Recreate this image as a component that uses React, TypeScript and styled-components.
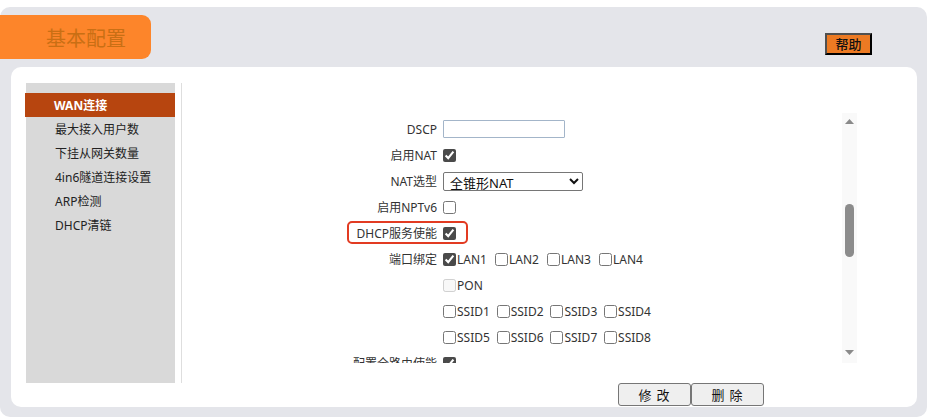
import React from "react";
import styled, { createGlobalStyle } from "styled-components";

const Global = createGlobalStyle`
  html, body { margin: 0; padding: 0; background: #ffffff; }
  body { font-family: "Noto Sans", "Noto Sans CJK SC", sans-serif; font-size: 12px; color: #333; }
  * { box-sizing: border-box; }
`;

const Page = styled.div`
  width: 931px;
  height: 420px;
  padding-top: 7px;
`;

const Panel = styled.div`
  width: 927px;
  height: 410px;
  background: #e4e5ea;
  border-radius: 10px;
  display: flex;
  flex-direction: column;
`;

const Header = styled.div`
  height: 60px;
  display: flex;
  justify-content: space-between;
  align-items: flex-start;
`;

const Tab = styled.div`
  margin-top: 8px;
  width: 151px;
  height: 44px;
  background: #fd852a;
  border-radius: 0 9px 9px 0;
  display: flex;
  align-items: center;
  padding-left: 46px;
  font-size: 20px;
  color: #c96f14;
  font-family: "Noto Sans CJK SC", sans-serif;
`;

const HelpButton = styled.button`
  margin-top: 26px;
  margin-right: 55px;
  width: 47px;
  height: 22px;
  padding: 0;
  background: #ec7a23;
  border-style: solid;
  border-width: 2px;
  border-color: #505050 #000 #000 #505050;
  color: #111;
  font-family: "Noto Sans CJK SC", sans-serif;
  font-size: 13px;
  font-weight: 500;
  line-height: 16px;
`;

const Card = styled.div`
  margin: 0 10px 0 11px;
  height: 340px;
  background: #ffffff;
  border-radius: 10px;
  display: flex;
  padding: 16px 0 0 15px;
`;

const Sidebar = styled.div`
  width: 149px;
  height: 300px;
  background: #d9d9d9;
  padding-top: 10px;
  display: flex;
  flex-direction: column;
`;

const NavItem = styled.div<{ $active?: boolean }>`
  height: 24px;
  display: flex;
  align-items: center;
  padding-left: 29px;
  font-size: 12px;
  color: ${(p) => (p.$active ? "#ffffff" : "#222")};
  background: ${(p) => (p.$active ? "#b7450f" : "transparent")};
  font-weight: ${(p) => (p.$active ? 700 : 400)};
  ${(p) => (p.$active ? "margin-left: -1px;" : "")}
`;

const Divider = styled.div`
  margin-left: 6px;
  width: 1px;
  height: 300px;
  background: #dedede;
`;

const Main = styled.div`
  display: flex;
  flex-direction: column;
  padding-top: 29px;
`;

const ScrollArea = styled.div`
  width: 675px;
  height: 251px;
  display: flex;
  overflow: hidden;
`;

const Form = styled.div`
  width: 660px;
  padding-top: 4px;
  display: flex;
  flex-direction: column;
`;

const Row = styled.div`
  position: relative;
  height: 26px;
  display: grid;
  grid-template-columns: 255px 1fr;
  column-gap: 6px;
  align-items: center;
  flex-shrink: 0;
`;

const Label = styled.div`
  text-align: right;
  color: #333;
  white-space: nowrap;
`;

const Field = styled.div`
  display: flex;
  align-items: center;
`;

const TextInput = styled.input`
  width: 122px;
  height: 18px;
  border: 1px solid #a3b5c9;
  border-radius: 1px;
  padding: 0 3px;
  margin: 0;
  outline: none;
`;

const Select = styled.select`
  width: 140px;
  height: 19px;
  margin: 0;
  padding: 0 2px;
  border: 1px solid #767676;
  border-radius: 2px;
  font-family: "Noto Sans", "Noto Sans CJK SC", sans-serif;
  font-size: 13px;
  color: #111;
  background: #fff;
`;

const Check = styled.input.attrs({ type: "checkbox" })`
  width: 13px;
  height: 13px;
  margin: 0;
  accent-color: #4a4a4a;
`;

const Option = styled.label<{ $w: number }>`
  width: ${(p) => p.$w}px;
  display: inline-flex;
  align-items: center;
  gap: 1px;
  color: #333;
  white-space: nowrap;
`;

const Highlight = styled.div`
  position: absolute;
  left: 165px;
  top: 1px;
  width: 121px;
  height: 23px;
  border: 2px solid #e23b22;
  border-radius: 5px;
  pointer-events: none;
`;

const Track = styled.div`
  width: 15px;
  height: 250px;
  margin-top: 1px;
  background: #f9f9f9;
  display: flex;
  flex-direction: column;
  align-items: center;
`;

const Arrow = styled.svg`
  flex-shrink: 0;
`;

const Thumb = styled.div`
  width: 9px;
  height: 53px;
  background: #8c8c8c;
  border-radius: 5px;
  margin-top: 80px;
`;

const Spacer = styled.div`
  flex: 1;
`;

const Buttons = styled.div`
  margin-top: 20px;
  padding-left: 436px;
  display: flex;
`;

const Btn = styled.button`
  width: 73px;
  height: 23px;
  padding: 0;
  margin: 0;
  background: #efefef;
  border: 1px solid #767676;
  border-radius: 3px;
  font-family: "Noto Sans CJK SC", sans-serif;
  font-size: 13px;
  color: #111;
  letter-spacing: 1px;
  white-space: pre;
`;

const Bottom = styled.div`
  height: 10px;
`;

const nav = ["WAN连接", "最大接入用户数", "下挂从网关数量", "4in6隧道连接设置", "ARP检测", "DHCP清链"];

export default function App() {
  return (
    <Page>
      <Global />
      <Panel>
        <Header>
          <Tab>基本配置</Tab>
          <HelpButton>帮助</HelpButton>
        </Header>
        <Card>
          <Sidebar>
            {nav.map((n, i) => (
              <NavItem key={n} $active={i === 0}>
                {n}
              </NavItem>
            ))}
          </Sidebar>
          <Divider />
          <Main>
            <ScrollArea>
              <Form>
                <Row>
                  <Label>DSCP</Label>
                  <Field>
                    <TextInput defaultValue="" />
                  </Field>
                </Row>
                <Row>
                  <Label>启用NAT</Label>
                  <Field>
                    <Check defaultChecked />
                  </Field>
                </Row>
                <Row>
                  <Label>NAT选型</Label>
                  <Field>
                    <Select defaultValue="full">
                      <option value="full">全锥形NAT</option>
                    </Select>
                  </Field>
                </Row>
                <Row>
                  <Label>启用NPTv6</Label>
                  <Field>
                    <Check />
                  </Field>
                </Row>
                <Row>
                  <Label>DHCP服务使能</Label>
                  <Field>
                    <Check defaultChecked />
                  </Field>
                  <Highlight />
                </Row>
                <Row>
                  <Label>端口绑定</Label>
                  <Field>
                    {["LAN1", "LAN2", "LAN3", "LAN4"].map((l, i) => (
                      <Option key={l} $w={52}>
                        <Check defaultChecked={i === 0} />
                        {l}
                      </Option>
                    ))}
                  </Field>
                </Row>
                <Row>
                  <Label />
                  <Field>
                    <Option $w={52}>
                      <Check disabled />
                      PON
                    </Option>
                  </Field>
                </Row>
                <Row>
                  <Label />
                  <Field>
                    {["SSID1", "SSID2", "SSID3", "SSID4"].map((l) => (
                      <Option key={l} $w={53.7}>
                        <Check />
                        {l}
                      </Option>
                    ))}
                  </Field>
                </Row>
                <Row>
                  <Label />
                  <Field>
                    {["SSID5", "SSID6", "SSID7", "SSID8"].map((l) => (
                      <Option key={l} $w={53.7}>
                        <Check />
                        {l}
                      </Option>
                    ))}
                  </Field>
                </Row>
                <Row>
                  <Label>配置全路由使能</Label>
                  <Field>
                    <Check defaultChecked />
                  </Field>
                </Row>
              </Form>
              <Track>
                <Arrow width="9" height="5" viewBox="0 0 9 5" style={{ marginTop: 6 }}>
                  <path d="M0 5 L4.5 0 L9 5 Z" fill="#8a8a8a" />
                </Arrow>
                <Thumb />
                <Spacer />
                <Arrow width="9" height="5" viewBox="0 0 9 5" style={{ marginBottom: 8 }}>
                  <path d="M0 0 L9 0 L4.5 5 Z" fill="#8a8a8a" />
                </Arrow>
              </Track>
            </ScrollArea>
            <Buttons>
              <Btn>修 改</Btn>
              <Btn>删 除</Btn>
            </Buttons>
          </Main>
        </Card>
        <Bottom />
      </Panel>
    </Page>
  );
}
